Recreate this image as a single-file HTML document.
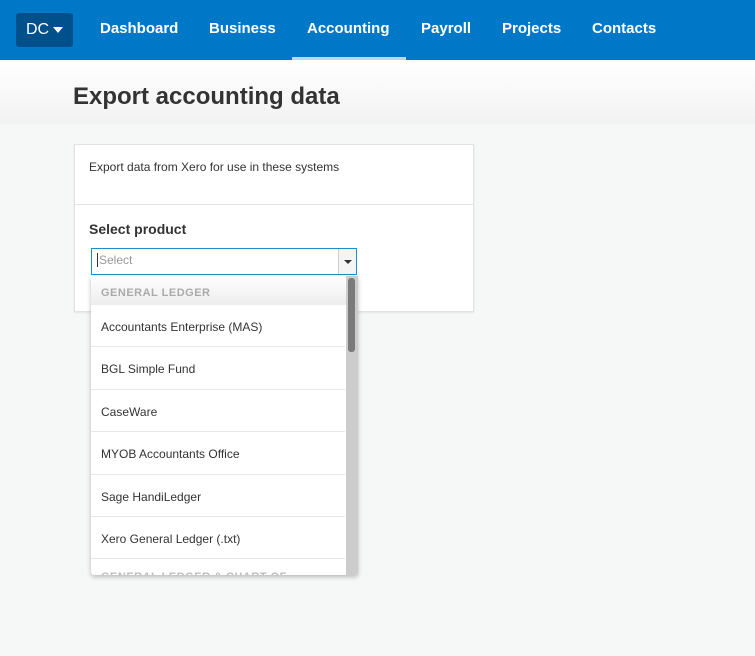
<!DOCTYPE html>
<html><head><style>
*{margin:0;padding:0;box-sizing:border-box}
body{width:755px;height:656px;background:#f6f7f7;font-family:"Liberation Sans",sans-serif;position:relative;overflow:hidden}
.nav{position:absolute;left:0;top:0;width:755px;height:60px;background:#0078c8}
.dc{position:absolute;left:16px;top:13px;width:57px;height:34px;background:#00508c;border-radius:3px;color:#fff;font-size:16px;line-height:34px;padding-left:10px}
.dc:after{content:"";position:absolute;left:37px;top:14px;border:5px solid transparent;border-top:6px solid #fff;border-bottom:0}
.ni{position:absolute;top:0;height:60px;line-height:57px;color:#fff;font-weight:bold;font-size:15px}
.ul{position:absolute;left:292px;top:57px;width:114px;height:3px;background:#b9d9ef}
.hd{position:absolute;left:0;top:60px;width:755px;height:64px;background:linear-gradient(#fff,#f2f2f2)}
.hd h1{position:absolute;left:73px;top:23px;font-size:24px;color:#333;font-weight:bold}
.card{position:absolute;left:74px;top:144px;width:400px;height:168px;background:#fff;border:1px solid #e2e2e2;box-shadow:0 1px 2px rgba(0,0,0,.08)}
.card .t{position:absolute;left:14px;top:15px;font-size:12px;color:#333}
.card .div{position:absolute;left:0;top:59px;width:398px;height:1px;background:#e2e2e2}
.card .l{position:absolute;left:14px;top:76px;font-size:14px;font-weight:bold;color:#333}
.inp{position:absolute;left:91px;top:248px;width:266px;height:27px;border:1px solid #1a8fc9;background:#fff}
.inp span{position:absolute;left:5px;top:4px;font-size:12px;color:#999;border-left:1px solid #333;padding-left:1px;line-height:14px}
.inp .btn{position:absolute;right:0;top:0;width:18px;height:25px;border-left:1px solid #ccc;background:#f4f4f4}
.inp .btn:after{content:"";position:absolute;left:5px;top:11px;border:4px solid transparent;border-top:4px solid #333;border-bottom:0}
.dd{position:absolute;left:91px;top:276px;width:267px;height:299px;background:#fff;box-shadow:0 2px 5px rgba(0,0,0,.25);overflow:hidden;border-radius:0 0 3px 3px}
.gh{height:29px;background:linear-gradient(#fff,#ededed);color:#aaa;font-size:11px;font-weight:bold;letter-spacing:.5px;padding:11px 0 0 10px}
.it{height:42.4px;border-bottom:1px solid #e6e6e6;font-size:12px;color:#333;padding:15px 0 0 10px;width:254px}
.gh2{color:#bbb;font-size:11px;font-weight:bold;padding:12px 0 0 10px;letter-spacing:.5px}
.track{position:absolute;right:0;top:0;width:12px;height:299px;background:#ccc}
.thumb{position:absolute;right:3px;top:2px;width:7px;height:74px;background:#7a7a7a;border-radius:3px}
</style></head><body>
<div class="nav">
<div class="dc">DC</div>
<div class="ni" style="left:100px">Dashboard</div>
<div class="ni" style="left:209px">Business</div>
<div class="ni" style="left:307px">Accounting</div>
<div class="ni" style="left:421px">Payroll</div>
<div class="ni" style="left:502px">Projects</div>
<div class="ni" style="left:592px">Contacts</div>
<div class="ul"></div>
</div>
<div class="hd"><h1>Export accounting data</h1></div>
<div class="card"><div class="t">Export data from Xero for use in these systems</div><div class="div"></div><div class="l">Select product</div></div>
<div class="inp"><span>Select</span><div class="btn"></div></div>
<div class="dd">
<div class="gh">GENERAL LEDGER</div>
<div class="it">Accountants Enterprise (MAS)</div>
<div class="it">BGL Simple Fund</div>
<div class="it">CaseWare</div>
<div class="it">MYOB Accountants Office</div>
<div class="it">Sage HandiLedger</div>
<div class="it">Xero General Ledger (.txt)</div>
<div class="gh2">GENERAL LEDGER &amp; CHART OF</div>
<div class="track"><div class="thumb"></div></div>
</div>
</body></html>
